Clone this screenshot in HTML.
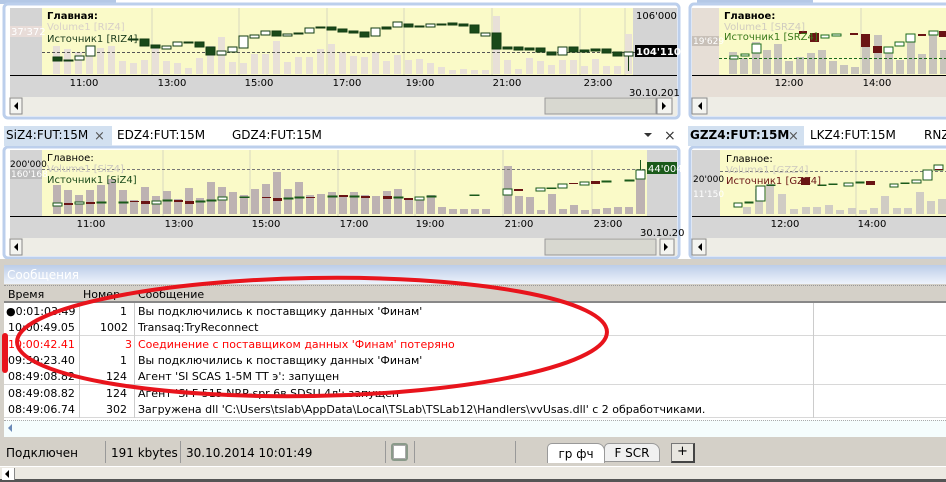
<!DOCTYPE html>
<html><head><meta charset="utf-8"><style>
*{margin:0;padding:0;box-sizing:border-box}
body{width:946px;height:482px;overflow:hidden;background:#fff;font-family:"DejaVu Sans","Liberation Sans",sans-serif;font-size:11px;color:#000;position:relative}
.a{position:absolute;white-space:nowrap}
.row{position:absolute;left:4px;width:942px;height:17px;border-bottom:1px solid #d8d8d8;background:#fff}
.row span{position:absolute;top:2px}
</style></head><body>
<svg class="a" style="left:0;top:0" width="946" height="262" font-family="DejaVu Sans, sans-serif">
<!-- frames -->
<rect x="0" y="0" width="116" height="4" fill="#b4c8e6"/>
<rect x="697" y="0" width="116" height="4" fill="#b4c8e6"/>
<rect x="4" y="4" width="675" height="114" rx="4" fill="#fff" stroke="#bccfec" stroke-width="3"/>
<rect x="690" y="4" width="260" height="114" rx="4" fill="#fff" stroke="#bccfec" stroke-width="3"/>
<rect x="4" y="147" width="675" height="111" rx="4" fill="#fff" stroke="#bccfec" stroke-width="3"/>
<rect x="690" y="147" width="260" height="111" rx="4" fill="#fff" stroke="#bccfec" stroke-width="3"/>
<!-- TOP LEFT -->
<rect x="10" y="8" width="32" height="67" fill="#d4d4d4"/>
<rect x="42" y="8" width="591" height="67" fill="#fafac8"/>
<rect x="633" y="8" width="44" height="67" fill="#d4d4d4"/>
<rect x="10" y="75" width="667" height="22" fill="#d6d6d6"/>
<line x1="10" y1="75.5" x2="677" y2="75.5" stroke="#000"/>
<rect x="10" y="97" width="667" height="19" fill="#eeede6"/>
<g stroke="#d8d8c0"><line x1="152" y1="8" x2="152" y2="75"/><line x1="239" y1="8" x2="239" y2="75"/><line x1="327" y1="8" x2="327" y2="75"/><line x1="404" y1="8" x2="404" y2="75"/><line x1="492" y1="8" x2="492" y2="75"/><line x1="580" y1="8" x2="580" y2="75"/><line x1="625" y1="8" x2="625" y2="75"/></g>
<g fill="#e8e0d8">
<rect x="53" y="46" width="7" height="28"/><rect x="64" y="49" width="7" height="25"/><rect x="75" y="52" width="7" height="22"/><rect x="86" y="49" width="7" height="25"/><rect x="97" y="48" width="7" height="26"/><rect x="108" y="46" width="7" height="28"/><rect x="119" y="61" width="7" height="13"/><rect x="130" y="63" width="7" height="11"/><rect x="141" y="60" width="7" height="14"/><rect x="152" y="46" width="7" height="28"/><rect x="163" y="61" width="7" height="13"/><rect x="174" y="63" width="7" height="11"/><rect x="185" y="68" width="7" height="6"/><rect x="196" y="58" width="7" height="16"/><rect x="207" y="46" width="7" height="28"/><rect x="218" y="37" width="7" height="37"/><rect x="229" y="62" width="7" height="12"/><rect x="240" y="63" width="7" height="11"/><rect x="251" y="54" width="7" height="20"/><rect x="262" y="54" width="7" height="20"/><rect x="273" y="41" width="7" height="33"/><rect x="284" y="62" width="7" height="12"/><rect x="295" y="57" width="7" height="17"/><rect x="306" y="57" width="7" height="17"/><rect x="317" y="49" width="7" height="25"/><rect x="328" y="44" width="7" height="30"/><rect x="339" y="52" width="7" height="22"/><rect x="350" y="56" width="7" height="18"/><rect x="361" y="57" width="7" height="17"/><rect x="372" y="52" width="7" height="22"/><rect x="383" y="61" width="7" height="13"/><rect x="394" y="55" width="7" height="19"/><rect x="405" y="60" width="7" height="14"/><rect x="416" y="59" width="7" height="15"/><rect x="427" y="63" width="7" height="11"/><rect x="438" y="67" width="7" height="7"/><rect x="449" y="70" width="7" height="4"/><rect x="460" y="69" width="7" height="5"/><rect x="471" y="70" width="7" height="4"/><rect x="482" y="70" width="7" height="4"/><rect x="493" y="16" width="7" height="58"/><rect x="504" y="60" width="7" height="14"/><rect x="515" y="69" width="7" height="5"/><rect x="526" y="58" width="7" height="16"/><rect x="537" y="61" width="7" height="13"/><rect x="548" y="65" width="7" height="9"/><rect x="559" y="60" width="7" height="14"/><rect x="570" y="60" width="7" height="14"/><rect x="581" y="66" width="7" height="8"/><rect x="592" y="59" width="7" height="15"/><rect x="603" y="66" width="7" height="8"/><rect x="614" y="66" width="7" height="8"/><rect x="625" y="34" width="7" height="40"/>
</g>
<line x1="42" y1="52.5" x2="677" y2="52.5" stroke="#555" stroke-dasharray="3,2"/>
<g stroke="#123c12" fill="#1a4a1a">
<rect x="53" y="57" width="9" height="4"/><rect x="64" y="60" width="9" height="1"/><rect x="75" y="56" width="9" height="4" fill="#fff"/><rect x="86" y="46" width="9" height="10" fill="#fff"/><rect x="129" y="39" width="9" height="1"/><rect x="140" y="39" width="9" height="7"/><rect x="151" y="45" width="9" height="3"/><rect x="162" y="46" width="9" height="3" fill="#fff"/><rect x="173" y="42" width="9" height="4" fill="#fff"/><rect x="184" y="42" width="9" height="1"/><rect x="195" y="42" width="9" height="5"/><rect x="206" y="47" width="9" height="8"/><rect x="217" y="51" width="9" height="4" fill="#fff"/><rect x="228" y="47" width="9" height="5" fill="#fff"/><rect x="239" y="36" width="9" height="12" fill="#fff"/><rect x="250" y="35" width="9" height="3" fill="#fff"/><rect x="261" y="31" width="9" height="4" fill="#fff"/><rect x="272" y="31" width="9" height="5"/><rect x="283" y="34" width="9" height="2" fill="#fff"/><rect x="294" y="33" width="9" height="1"/><rect x="305" y="28" width="9" height="5" fill="#fff"/><rect x="316" y="27" width="9" height="1"/><rect x="327" y="27" width="9" height="3"/><rect x="338" y="29" width="9" height="3"/><rect x="349" y="31" width="9" height="2"/><rect x="360" y="32" width="9" height="5"/><rect x="371" y="28" width="9" height="8" fill="#fff"/><rect x="382" y="27" width="9" height="2"/><rect x="393" y="22" width="9" height="5" fill="#fff"/><rect x="404" y="24" width="9" height="3"/><rect x="415" y="26" width="9" height="1"/><rect x="426" y="24" width="9" height="3" fill="#fff"/><rect x="437" y="24" width="9" height="1"/><rect x="448" y="23" width="9" height="2"/><rect x="459" y="24" width="9" height="2"/><rect x="470" y="25" width="9" height="8"/><rect x="481" y="33" width="9" height="3" fill="#fff"/><rect x="492" y="33" width="9" height="16"/><rect x="503" y="47" width="9" height="2"/><rect x="514" y="47" width="9" height="3"/><rect x="525" y="48" width="9" height="2"/><rect x="536" y="48" width="9" height="4"/><rect x="547" y="52" width="9" height="3"/><rect x="558" y="47" width="9" height="8" fill="#fff"/><rect x="569" y="47" width="9" height="5"/><rect x="580" y="50" width="9" height="2"/><rect x="591" y="49" width="9" height="2"/><rect x="602" y="49" width="9" height="4"/><rect x="613" y="52" width="9" height="4"/><rect x="624" y="52" width="9" height="4" fill="#fff"/><line x1="628.5" y1="56" x2="628.5" y2="71"/>
</g>
<text x="47" y="19" font-size="10" font-weight="bold">Главная:</text>
<text x="47" y="30" font-size="10" fill="#d8d0c8">Volume1 [RIZ4]</text>
<text x="47" y="42" font-size="10" fill="#1a3a1a">Источник1 [RIZ4]</text>
<rect x="10" y="26" width="32" height="11" fill="#e8dcd8"/>
<text x="11" y="35" font-size="10" fill="#fff">37'372</text>
<text x="636" y="19" font-size="10">106'000</text>
<rect x="635" y="45" width="42" height="12" fill="#000"/>
<text x="636" y="55" font-size="10" fill="#fff" font-weight="bold">104'110</text>
<g font-size="10" text-anchor="middle"><text x="84" y="86">11:00</text><text x="172" y="86">13:00</text><text x="259" y="86">15:00</text><text x="347" y="86">17:00</text><text x="420" y="86">19:00</text><text x="507" y="86">21:00</text><text x="598" y="86">23:00</text></g>
<text x="629" y="96" font-size="10">30.10.201</text>
<rect x="10" y="98" width="12" height="16" fill="#f4f4f0" stroke="#888"/><path d="M18 102v8l-4-4z"/>
<rect x="545" y="98" width="111" height="16" fill="#d8d8d0" stroke="#999"/>
<rect x="657" y="98" width="15" height="16" fill="#f4f4f0" stroke="#888"/><path d="M662 102v8l4-4z"/>
<!-- TOP RIGHT -->
<rect x="692" y="8" width="27" height="67" fill="#e6ded6"/>
<rect x="719" y="8" width="227" height="67" fill="#fafac8"/>
<rect x="692" y="75" width="254" height="22" fill="#e6ded6"/>
<line x1="692" y1="75.5" x2="946" y2="75.5" stroke="#000"/>
<rect x="692" y="97" width="254" height="19" fill="#eeede6"/>
<g stroke="#d8d8c0"><line x1="861" y1="8" x2="861" y2="75"/></g>
<g fill="#c8c4bc"><rect x="729" y="52" width="8" height="22"/><rect x="740" y="58" width="8" height="16"/><rect x="752" y="42" width="8" height="32"/><rect x="763" y="50" width="8" height="24"/><rect x="774" y="44" width="8" height="30"/><rect x="785" y="61" width="8" height="13"/><rect x="796" y="57" width="8" height="17"/><rect x="807" y="53" width="8" height="21"/><rect x="818" y="50" width="8" height="24"/><rect x="829" y="61" width="8" height="13"/><rect x="840" y="65" width="8" height="9"/><rect x="851" y="67" width="8" height="7"/><rect x="862" y="40" width="8" height="34"/><rect x="874" y="35" width="8" height="39"/><rect x="885" y="49" width="8" height="25"/><rect x="896" y="60" width="8" height="14"/><rect x="907" y="40" width="8" height="34"/><rect x="918" y="54" width="8" height="20"/><rect x="929" y="32" width="8" height="42"/><rect x="940" y="50" width="6" height="24"/></g>
<line x1="719" y1="58.5" x2="946" y2="58.5" stroke="#1a6a1a" stroke-dasharray="3,2"/>
<g stroke="#1a6a1a" fill="#fff"><rect x="730" y="56" width="8" height="3"/><rect x="741" y="54" width="8" height="2"/><rect x="752" y="44" width="9" height="9"/><rect x="821" y="35" width="8" height="3"/><rect x="832" y="34" width="9" height="2"/><rect x="884" y="47" width="9" height="6"/><rect x="895" y="42" width="9" height="4"/><rect x="906" y="34" width="9" height="8"/><rect x="929" y="31" width="9" height="4"/></g>
<g fill="#6a1414"><rect x="799" y="31" width="8" height="3"/><rect x="810" y="33" width="9" height="9"/><rect x="850" y="33" width="8" height="2"/><rect x="861" y="34" width="9" height="13"/><rect x="873" y="46" width="9" height="7"/><rect x="918" y="34" width="8" height="2"/><rect x="939" y="31" width="7" height="6"/></g>
<text x="724" y="19" font-size="10" font-weight="bold">Главное:</text>
<text x="724" y="30" font-size="10" fill="#d0ccc0">Volume1 [SRZ4]</text>
<text x="724" y="40" font-size="10" fill="#3a7a1a">Источник1 [SRZ4]</text>
<rect x="692" y="36" width="27" height="10" fill="#c8c0b8"/><text x="693" y="44" font-size="9" fill="#fff">19'629</text>
<g font-size="10" text-anchor="middle"><text x="789" y="86">12:00</text><text x="877" y="86">14:00</text></g>
<rect x="692" y="98" width="15" height="16" fill="#f4f4f0" stroke="#888"/><path d="M702 102v8l-4-4z"/>
<!-- TABS -->
<rect x="4" y="126" width="108" height="20" fill="#d2e0f0"/>
<text x="6" y="139" font-size="12">SiZ4:FUT:15M</text><text x="94" y="140" font-size="13" fill="#555">×</text>
<text x="117" y="139" font-size="12">EDZ4:FUT:15M</text>
<text x="232" y="139" font-size="12">GDZ4:FUT:15M</text>
<path d="M644 133h8l-4 4z" fill="#333"/><text x="664" y="140" font-size="14" fill="#333">×</text>
<rect x="688" y="126" width="116" height="20" fill="#d2e0f0"/>
<text x="690" y="139" font-size="12" font-weight="bold">GZZ4:FUT:15M</text><text x="788" y="140" font-size="13" fill="#555">×</text>
<text x="810" y="139" font-size="12">LKZ4:FUT:15M</text>
<text x="924" y="139" font-size="12">RNZ</text>
<!-- BOTTOM LEFT -->
<rect x="10" y="150" width="32" height="66" fill="#d4d4d4"/>
<rect x="42" y="150" width="605" height="66" fill="#fafac8"/>
<rect x="647" y="150" width="30" height="66" fill="#d4d4d4"/>
<rect x="10" y="216" width="667" height="22" fill="#d6d6d6"/>
<line x1="10" y1="216.5" x2="677" y2="216.5" stroke="#000"/>
<rect x="10" y="238" width="667" height="18" fill="#eeede6"/>
<g stroke="#d8d8c0"><line x1="163" y1="150" x2="163" y2="216"/><line x1="250" y1="150" x2="250" y2="216"/><line x1="338" y1="150" x2="338" y2="216"/><line x1="415" y1="150" x2="415" y2="216"/><line x1="503" y1="150" x2="503" y2="216"/><line x1="592" y1="150" x2="592" y2="216"/></g>
<g fill="#bdb2b2"><rect x="53" y="185" width="8" height="29"/><rect x="64" y="190" width="8" height="24"/><rect x="75" y="195" width="8" height="19"/><rect x="86" y="190" width="8" height="24"/><rect x="97" y="185" width="8" height="29"/><rect x="108" y="179" width="8" height="35"/><rect x="119" y="190" width="8" height="24"/><rect x="130" y="200" width="8" height="14"/><rect x="141" y="187" width="8" height="27"/><rect x="152" y="196" width="8" height="18"/><rect x="163" y="191" width="8" height="23"/><rect x="174" y="199" width="8" height="15"/><rect x="185" y="188" width="8" height="26"/><rect x="196" y="198" width="8" height="16"/><rect x="207" y="182" width="8" height="32"/><rect x="218" y="187" width="8" height="27"/><rect x="229" y="192" width="8" height="22"/><rect x="240" y="195" width="8" height="19"/><rect x="251" y="189" width="8" height="25"/><rect x="262" y="184" width="8" height="30"/><rect x="273" y="172" width="8" height="42"/><rect x="284" y="189" width="8" height="25"/><rect x="295" y="182" width="8" height="32"/><rect x="306" y="195" width="8" height="19"/><rect x="317" y="194" width="8" height="20"/><rect x="328" y="192" width="8" height="22"/><rect x="339" y="195" width="8" height="19"/><rect x="350" y="192" width="8" height="22"/><rect x="361" y="195" width="8" height="19"/><rect x="372" y="196" width="8" height="18"/><rect x="383" y="191" width="8" height="23"/><rect x="394" y="189" width="8" height="25"/><rect x="405" y="200" width="8" height="14"/><rect x="416" y="199" width="8" height="15"/><rect x="427" y="195" width="8" height="19"/><rect x="438" y="207" width="8" height="7"/><rect x="449" y="209" width="8" height="5"/><rect x="460" y="209" width="8" height="5"/><rect x="471" y="209" width="8" height="5"/><rect x="482" y="209" width="8" height="5"/><rect x="504" y="166" width="8" height="48"/><rect x="515" y="196" width="8" height="18"/><rect x="526" y="197" width="8" height="17"/><rect x="537" y="210" width="8" height="4"/><rect x="548" y="194" width="8" height="20"/><rect x="559" y="209" width="8" height="5"/><rect x="570" y="205" width="8" height="9"/><rect x="581" y="210" width="8" height="4"/><rect x="592" y="209" width="8" height="5"/><rect x="603" y="208" width="8" height="6"/><rect x="614" y="207" width="8" height="7"/><rect x="625" y="207" width="8" height="7"/><rect x="636" y="172" width="9" height="42"/></g>
<line x1="42" y1="169.5" x2="677" y2="169.5" stroke="#777" stroke-dasharray="3,2"/>
<g stroke="#1a5a1a" fill="#1a5a1a"><rect x="53" y="203" width="9" height="3" fill="#fff"/><rect x="75" y="202" width="9" height="2" fill="#fff"/><rect x="97" y="202" width="9" height="1"/><rect x="119" y="202" width="9" height="1"/><rect x="152" y="201" width="9" height="3" fill="#fff"/><rect x="163" y="200" width="9" height="1"/><rect x="196" y="201" width="9" height="1"/><rect x="207" y="200" width="9" height="1"/><rect x="218" y="197" width="9" height="3" fill="#fff"/><rect x="240" y="197" width="9" height="0.5"/><rect x="284" y="198" width="9" height="1"/><rect x="295" y="197" width="9" height="1"/><rect x="328" y="196" width="9" height="1"/><rect x="350" y="196" width="9" height="1"/><rect x="394" y="197" width="9" height="1"/><rect x="415" y="197" width="9" height="3" fill="#fff"/><rect x="427" y="196" width="9" height="1"/><rect x="470" y="195" width="9" height="0.5"/><rect x="503" y="189" width="9" height="6" fill="#fff"/><rect x="536" y="188" width="9" height="3" fill="#fff"/><rect x="547" y="188" width="9" height="0.5"/><rect x="558" y="184" width="9" height="4" fill="#fff"/><rect x="580" y="182" width="9" height="3" fill="#fff"/><rect x="602" y="181" width="9" height="1"/><rect x="625" y="180" width="9" height="1"/><rect x="636" y="170" width="9" height="9" fill="#fff"/><line x1="640.5" y1="160" x2="640.5" y2="170"/></g>
<g fill="#6a1414"><rect x="64" y="203" width="9" height="2"/><rect x="86" y="202" width="9" height="2"/><rect x="130" y="201" width="9" height="1"/><rect x="141" y="201" width="9" height="3"/><rect x="174" y="200" width="9" height="2"/><rect x="185" y="201" width="9" height="3"/><rect x="262" y="197" width="9" height="1"/><rect x="273" y="198" width="9" height="3"/><rect x="306" y="197" width="9" height="1"/><rect x="339" y="195" width="9" height="2"/><rect x="361" y="196" width="9" height="2"/><rect x="383" y="196" width="9" height="3"/><rect x="404" y="198" width="9" height="2"/><rect x="514" y="189" width="9" height="2"/><rect x="569" y="183" width="9" height="1"/><rect x="591" y="181" width="9" height="3"/></g>
<text x="47" y="161" font-size="10">Главное:</text>
<text x="47" y="172" font-size="10" fill="#ccc8c0">Volume1 [SiZ4]</text>
<text x="47" y="183" font-size="10" fill="#1a4a1a">Источник1 [SiZ4]</text>
<text x="10" y="167" font-size="9">200'000</text>
<rect x="10" y="169" width="32" height="10" fill="#bcbcbc"/><text x="11" y="177" font-size="9" fill="#fff">160'168</text>
<rect x="647" y="162" width="30" height="12" fill="#1a5a1a"/><text x="648" y="172" font-size="10" fill="#fff">44'004</text>
<g font-size="10" text-anchor="middle"><text x="91" y="227">11:00</text><text x="179" y="227">13:00</text><text x="266" y="227">15:00</text><text x="354" y="227">17:00</text><text x="430" y="227">19:00</text><text x="519" y="227">21:00</text><text x="608" y="227">23:00</text></g>
<text x="640" y="236" font-size="10">30.10.20</text>
<rect x="10" y="239" width="12" height="16" fill="#f4f4f0" stroke="#888"/><path d="M18 243v8l-4-4z"/>
<rect x="545" y="239" width="111" height="16" fill="#d8d8d0" stroke="#999"/>
<rect x="660" y="239" width="14" height="16" fill="#f4f4f0" stroke="#888"/><path d="M664 243v8l4-4z"/>
<!-- BOTTOM RIGHT -->
<rect x="692" y="150" width="28" height="66" fill="#d4d4d4"/>
<rect x="720" y="150" width="226" height="66" fill="#fafac8"/>
<rect x="692" y="216" width="254" height="22" fill="#d6d6d6"/>
<line x1="692" y1="216.5" x2="946" y2="216.5" stroke="#000"/>
<rect x="692" y="238" width="254" height="18" fill="#eeede6"/>
<line x1="856" y1="150" x2="856" y2="216" stroke="#d8d8c0"/>
<g fill="#d0ccc4"><rect x="743" y="207" width="8" height="7"/><rect x="755" y="189" width="8" height="25"/><rect x="766" y="184" width="8" height="30"/><rect x="778" y="194" width="8" height="20"/><rect x="790" y="209" width="8" height="5"/><rect x="802" y="207" width="8" height="7"/><rect x="813" y="207" width="8" height="7"/><rect x="825" y="205" width="8" height="9"/><rect x="836" y="210" width="8" height="4"/><rect x="848" y="208" width="8" height="6"/><rect x="859" y="210" width="8" height="4"/><rect x="870" y="208" width="8" height="6"/><rect x="881" y="196" width="8" height="18"/><rect x="893" y="208" width="8" height="6"/><rect x="904" y="208" width="8" height="6"/><rect x="916" y="192" width="8" height="22"/><rect x="927" y="201" width="8" height="13"/><rect x="938" y="199" width="8" height="15"/></g>
<line x1="720" y1="171.5" x2="946" y2="171.5" stroke="#777" stroke-dasharray="3,2"/>
<g stroke="#1a5a1a" fill="#fff"><rect x="734" y="203" width="8" height="4"/><rect x="745" y="202" width="8" height="1" fill="#1a5a1a"/><rect x="756" y="186" width="9" height="15"/><rect x="767" y="185" width="8" height="0.5"/><rect x="818" y="185" width="8" height="0.5"/><rect x="829" y="184" width="8" height="0.5"/><rect x="844" y="183" width="9" height="3"/><rect x="856" y="182" width="8" height="1" fill="#1a5a1a"/><rect x="890" y="184" width="8" height="3"/><rect x="901" y="183" width="8" height="0.5"/><rect x="912" y="180" width="9" height="3"/><rect x="923" y="170" width="9" height="10"/><rect x="934" y="165" width="9" height="5"/></g>
<g fill="#6a1414"><rect x="801" y="178" width="9" height="7"/><rect x="866" y="181" width="9" height="4"/><rect x="935" y="169" width="8" height="1"/></g>
<text x="726" y="162" font-size="10">Главное:</text>
<text x="726" y="173" font-size="10" fill="#d0ccc0">Volume1 [GZZ4]</text>
<text x="726" y="184" font-size="10" fill="#6a1414">Источник1 [GZZ4]</text>
<text x="693" y="182" font-size="9">20'000</text>
<text x="693" y="197" font-size="9" fill="#fff">11'150</text>
<g font-size="10" text-anchor="middle"><text x="785" y="227">12:00</text><text x="872" y="227">14:00</text></g>
<rect x="692" y="239" width="14" height="16" fill="#f4f4f0" stroke="#888"/><path d="M702 243v8l-4-4z"/>
<rect x="0" y="259" width="946" height="3" fill="#d4d0c8"/>
</svg>
<!-- messages -->
<div class="a" style="left:0;top:262px;width:946px;height:220px;background:#d4d0c8"></div>
<div class="a" style="left:4px;top:265px;width:942px;height:19px;background:linear-gradient(#bccde8,#eef3fb);color:#fff;font-size:12px;padding:3px 3px">Сообщения</div>
<div class="a" style="left:4px;top:285px;width:942px;height:18px;background:#d4d0c8;border-top:1px dotted #999;border-bottom:2px solid #888"></div>
<span class="a" style="left:8px;top:288px">Время</span><span class="a" style="left:83px;top:288px">Номер</span><span class="a" style="left:138px;top:288px">Сообщение</span>
<div class="a" style="left:4px;top:303px;width:942px;height:117px;background:#fff"></div>
<div class="row" style="top:303px"><span style="left:2px">●0:01:03.49</span><span style="left:116px">1</span><span style="left:134px">Вы подключились к поставщику данных 'Финам'</span></div>
<div class="row" style="top:319px"><span style="left:4px">10:00:49.05</span><span style="left:96px">1002</span><span style="left:134px">Transaq:TryReconnect</span></div>
<div class="row" style="top:336px;color:#f00"><span style="left:4px">10:00:42.41</span><span style="left:121px">3</span><span style="left:134px">Соединение с поставщиком данных 'Финам' потеряно</span></div>
<div class="row" style="top:352px"><span style="left:4px">09:59:23.40</span><span style="left:116px">1</span><span style="left:134px">Вы подключились к поставщику данных 'Финам'</span></div>
<div class="row" style="top:368px"><span style="left:4px">08:49:08.82</span><span style="left:102px">124</span><span style="left:134px">Агент 'SI SCAS 1-5M TT э': запущен</span></div>
<div class="row" style="top:385px"><span style="left:4px">08:49:08.82</span><span style="left:102px">124</span><span style="left:134px">Агент 'SI F 515 NRP-spr 6в SDSU 4л': запущен</span></div>
<div class="row" style="top:401px"><span style="left:4px">08:49:06.74</span><span style="left:102px">302</span><span style="left:134px">Загружена dll 'C:\Users\tslab\AppData\Local\TSLab\TSLab12\Handlers\vvUsas.dll' с 2 обработчиками.</span></div>
<div class="a" style="left:79px;top:303px;width:1px;height:115px;background:#ccc"></div>
<div class="a" style="left:134px;top:303px;width:1px;height:115px;background:#ccc"></div>
<div class="a" style="left:813px;top:303px;width:1px;height:115px;background:#ccc"></div>
<div class="a" style="left:4px;top:420px;width:942px;height:17px;background:#f5fdfd;border-top:1px dotted #aaa"></div>
<div class="a" style="left:8px;top:424px;width:0;height:0;border:4px solid transparent;border-right:4px solid #6a8ab8;border-left:0"></div>
<span class="a" style="left:6px;top:446px;font-size:12px">Подключен</span>
<div class="a" style="left:105px;top:441px;width:1px;height:22px;background:#999"></div>
<span class="a" style="left:111px;top:446px;font-size:12px">191 kbytes</span>
<div class="a" style="left:180px;top:441px;width:1px;height:22px;background:#999"></div>
<span class="a" style="left:186px;top:446px;font-size:12px">30.10.2014 10:01:49</span>
<div class="a" style="left:385px;top:441px;width:1px;height:22px;background:#999"></div>
<div class="a" style="left:391px;top:443px;width:17px;height:18px;background:#8a9a8a;border-radius:3px"><div style="margin:2px;width:13px;height:14px;background:#fff;border:1px solid #aaa"></div></div>
<div class="a" style="left:414px;top:441px;width:1px;height:22px;background:#999"></div>
<div class="a" style="left:515px;top:441px;width:1px;height:22px;background:#999"></div>
<div class="a" style="left:547px;top:443px;width:58px;height:20px;background:#fff;border:1px solid #999;border-bottom:none;border-radius:5px 8px 0 0;text-align:center;padding-top:3px;font-size:12px">гр фч</div>
<div class="a" style="left:604px;top:443px;width:56px;height:19px;background:#f0f0f0;border:1px solid #999;border-radius:5px 8px 0 0;text-align:center;padding-top:2px;font-size:12px">F SCR</div>
<div class="a" style="left:671px;top:443px;width:24px;height:20px;background:#e8e6e0;border:1px solid #777;border-right:2px solid #444;border-bottom:2px solid #444;text-align:center;font-size:13px">+</div>
<div class="a" style="left:0;top:466px;width:946px;height:1px;background:#fff"></div>
<div class="a" style="left:0;top:467px;width:946px;height:15px;background:#ece9e2;border-bottom:3px solid #555"></div>
<div class="a" style="left:2px;top:468px;width:13px;height:12px;background:#fff;border-right:1px solid #888"></div>
<div class="a" style="left:5px;top:470px;width:0;height:0;border:4px solid transparent;border-right:4px solid #000;border-left:0"></div>
<!-- annotation -->
<svg class="a" style="left:0;top:262px" width="946" height="160">
<ellipse cx="312" cy="75" rx="295" ry="59" fill="none" stroke="#e8141c" stroke-width="4" transform="rotate(-1 312 75)"/>
<rect x="2" y="71" width="6" height="40" rx="3" fill="#e8141c"/>
</svg>
</body></html>
